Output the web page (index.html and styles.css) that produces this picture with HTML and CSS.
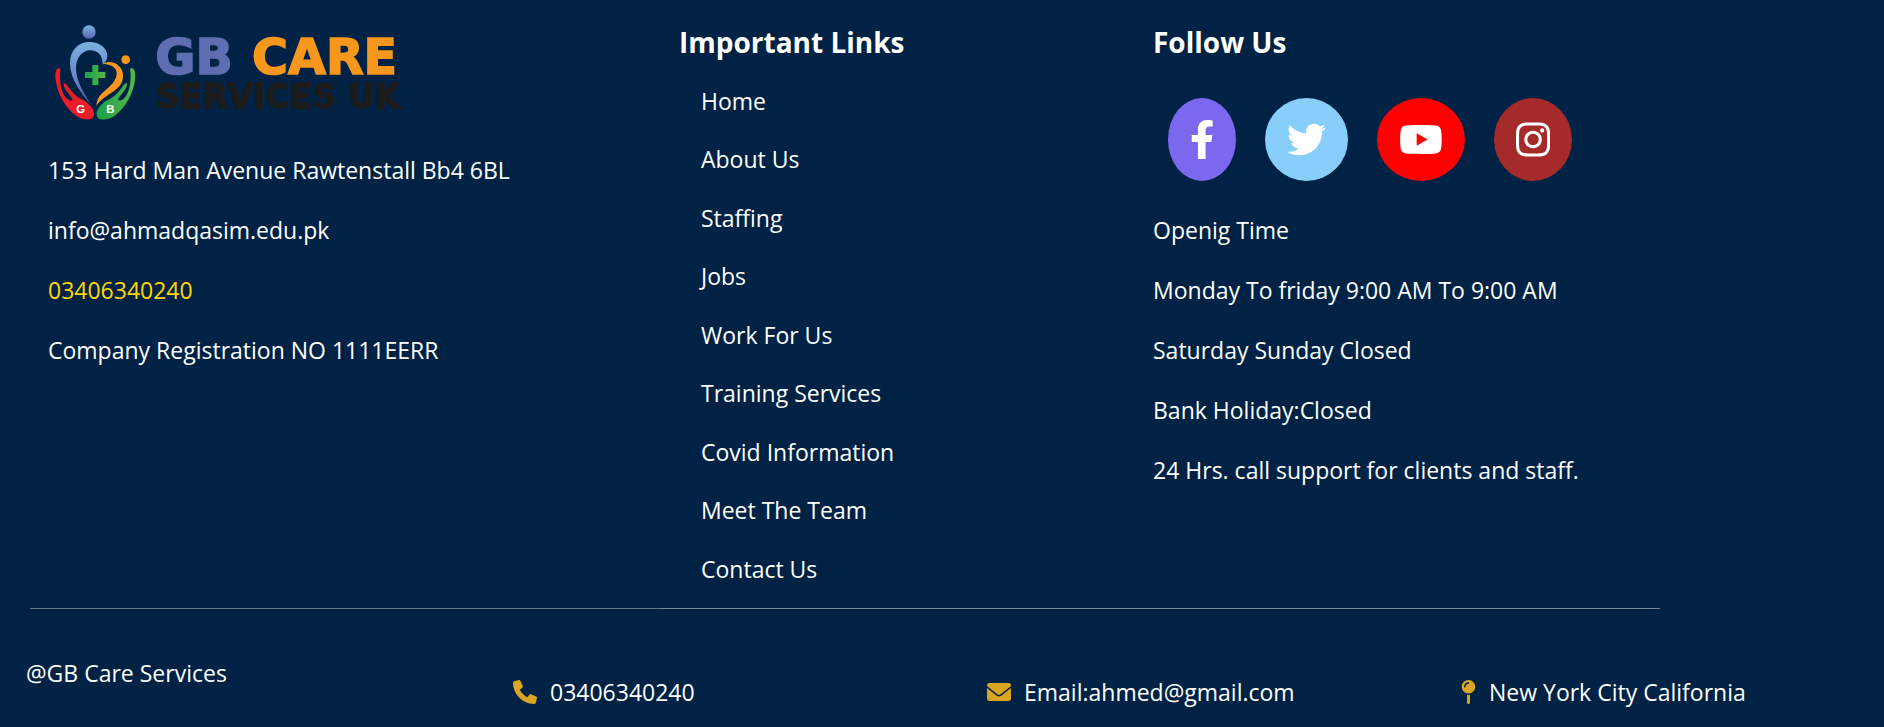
FILE: index.html
```html
<!DOCTYPE html>
<html lang="en">
<head>
<meta charset="utf-8">
<title>GB Care Services</title>
<link rel="stylesheet" href="styles.css">
</head>
<body>
<footer class="footer">
  <div class="columns">
    <section class="column">
      <svg class="logo" viewBox="84 60 1080 306" role="img" aria-label="GB Care Services UK">
        <defs>
          <linearGradient id="blue" x1="0" y1="0" x2="0" y2="1"><stop offset="0" stop-color="#79b0e0"/><stop offset="1" stop-color="#5c63b0"/></linearGradient>
          <linearGradient id="green" x1="0" y1="0" x2="1" y2="0"><stop offset="0" stop-color="#55b948"/><stop offset="1" stop-color="#1b9f4b"/></linearGradient>
          <linearGradient id="cross" x1="0" y1="0" x2="1" y2="0"><stop offset="0" stop-color="#1b9f4b"/><stop offset="1" stop-color="#55b948"/></linearGradient>
          <path id="hand" d="M118 204C106 205 104 225 108 245C115 285 135 320 165 345C178 356 195 359 208 358C220 357 225 345 221 334C215 318 200 305 185 298C168 290 160 280 150 268C145 260 140 252 132 248C128 258 138 270 145 280C150 288 160 296 157 301C148 304 138 295 132 285C120 262 119 235 121 212C122 206 120 204 118 204Z"/>
        </defs>
        <circle cx="207" cy="96" r="20" fill="url(#blue)"/>
        <path fill="url(#blue)" d="M214 316C185 280 150 240 150 190C150 150 175 126 208 126C240 126 262 145 262 168C262 178 256 188 248 194C248 165 232 151 212 151C185 151 168 175 168 205C168 245 195 285 214 316Z"/>
        <circle cx="317" cy="179" r="13" fill="#f8971d"/>
        <path fill="#f8971d" d="M250 192C262 184 280 184 292 194C308 205 314 225 306 245C295 275 250 285 229 318C230 285 255 275 273 255C290 238 296 215 283 203C275 195 262 193 250 192Z"/>
        <path fill="url(#cross)" d="M217 195H235V216H256V234H235V255H217V234H195V216H217Z"/>
        <use href="#hand" fill="#ed1c29"/>
        <use href="#hand" fill="url(#green)" transform="translate(452 0) scale(-1 1)"/>
        <text class="logo-initial" x="182" y="339">G</text>
        <text class="logo-initial" x="271" y="339">B</text>
        <text class="logo-name logo-gb" x="406" y="221">GB</text>
        <text class="logo-name logo-care" x="696" y="221">CARE</text>
        <text class="logo-sub" x="409" y="323">SERVICES UK</text>
      </svg>
      <p>153 Hard Man Avenue Rawtenstall Bb4 6BL</p>
      <p>info@ahmadqasim.edu.pk</p>
      <p class="phone">03406340240</p>
      <p>Company Registration NO 1111EERR</p>
    </section>
    <section class="column column-strong">
      <h2>Important Links</h2>
      <ul class="links">
        <li><a href="#">Home</a></li>
        <li><a href="#">About Us</a></li>
        <li><a href="#">Staffing</a></li>
        <li><a href="#">Jobs</a></li>
        <li><a href="#">Work For Us</a></li>
        <li><a href="#">Training Services</a></li>
        <li><a href="#">Covid Information</a></li>
        <li><a href="#">Meet The Team</a></li>
        <li><a href="#">Contact Us</a></li>
      </ul>
    </section>
    <section class="column column-strong">
      <h2>Follow Us</h2>
      <div class="social">
        <a class="facebook" href="#" aria-label="Facebook"><svg viewBox="0 0 320 512"><path d="M279.14 288l14.22-92.66h-88.91v-60.13c0-25.35 12.42-50.06 52.24-50.06h40.42V6.26S260.43 0 225.36 0c-73.22 0-121.08 44.38-121.08 124.72v70.62H22.89V288h81.39v224h100.17V288z"/></svg></a>
        <a class="twitter" href="#" aria-label="Twitter"><svg viewBox="0 0 512 512"><path d="M459.37 151.716c.325 4.548.325 9.097.325 13.645 0 138.72-105.583 298.558-298.558 298.558-59.452 0-114.68-17.219-161.137-47.106 8.447.974 16.568 1.299 25.34 1.299 49.055 0 94.213-16.568 130.274-44.832-46.132-.975-84.792-31.188-98.112-72.772 6.498.974 12.995 1.624 19.818 1.624 9.421 0 18.843-1.3 27.614-3.573-48.081-9.747-84.143-51.98-84.143-102.985v-1.299c13.969 7.797 30.214 12.67 47.431 13.319-28.264-18.843-46.781-51.005-46.781-87.391 0-19.492 5.197-37.36 14.294-52.954 51.655 63.675 129.3 105.258 216.365 109.807-1.624-7.797-2.599-15.918-2.599-24.04 0-57.828 46.782-104.934 104.934-104.934 30.213 0 57.502 12.67 76.67 33.137 23.715-4.548 46.456-13.32 66.599-25.34-7.798 24.366-24.366 44.833-46.132 57.827 21.117-2.273 41.584-8.122 60.426-16.243-14.292 20.791-32.161 39.308-52.628 54.253z"/></svg></a>
        <a class="youtube" href="#" aria-label="YouTube"><svg viewBox="0 0 576 512"><path d="M549.655 124.083c-6.281-23.65-24.787-42.276-48.284-48.597C458.781 64 288 64 288 64S117.22 64 74.629 75.486c-23.497 6.322-42.003 24.947-48.284 48.597-11.412 42.867-11.412 132.305-11.412 132.305s0 89.438 11.412 132.305c6.281 23.65 24.787 41.5 48.284 47.821C117.22 448 288 448 288 448s170.78 0 213.371-11.486c23.497-6.321 42.003-24.171 48.284-47.821 11.412-42.867 11.412-132.305 11.412-132.305s0-89.438-11.412-132.305zm-317.51 213.508V175.185l142.739 81.205-142.739 81.201z"/></svg></a>
        <a class="instagram" href="#" aria-label="Instagram"><svg viewBox="0 0 448 512"><path d="M224.1 141c-63.6 0-114.9 51.3-114.9 114.9s51.3 114.9 114.9 114.9S339 319.5 339 255.9 287.7 141 224.1 141zm0 189.6c-41.1 0-74.7-33.5-74.7-74.7s33.5-74.7 74.7-74.7 74.7 33.5 74.7 74.7-33.6 74.7-74.7 74.7zm146.4-194.3c0 14.9-12 26.8-26.8 26.8-14.9 0-26.8-12-26.8-26.8s12-26.8 26.8-26.8 26.8 12 26.8 26.8zm76.1 27.2c-1.7-35.9-9.9-67.7-36.2-93.9-26.2-26.2-58-34.4-93.9-36.2-37-2.1-147.9-2.1-184.9 0-35.8 1.7-67.6 9.9-93.9 36.1s-34.4 58-36.2 93.9c-2.1 37-2.1 147.9 0 184.9 1.7 35.9 9.9 67.7 36.2 93.9s58 34.4 93.9 36.2c37 2.1 147.9 2.1 184.9 0 35.9-1.7 67.7-9.9 93.9-36.2 26.2-26.2 34.4-58 36.2-93.9 2.1-37 2.1-147.8 0-184.8zM398.8 388c-7.8 19.6-22.9 34.7-42.6 42.6-29.5 11.7-99.5 9-132.1 9s-102.7 2.6-132.1-9c-19.6-7.8-34.7-22.9-42.6-42.6-11.7-29.5-9-99.5-9-132.1s-2.6-102.7 9-132.1c7.8-19.6 22.9-34.7 42.6-42.6 29.5-11.7 99.5-9 132.1-9s102.7-2.6 132.1 9c19.6 7.8 34.7 22.9 42.6 42.6 11.7 29.5 9 99.5 9 132.1s2.7 102.7-9 132.1z"/></svg></a>
      </div>
      <p>Openig Time</p>
      <p>Monday To friday 9:00 AM To 9:00 AM</p>
      <p>Saturday Sunday Closed</p>
      <p>Bank Holiday:Closed</p>
      <p>24 Hrs. call support for clients and staff.</p>
    </section>
  </div>
  <div class="bottom">
    <div class="brand">@GB Care Services</div>
    <div class="contact"><svg viewBox="0 0 512 512"><path d="M511.2 387l-23.25 100.8c-3.266 14.25-15.79 24.22-30.46 24.22C205.2 512 0 306.8 0 54.5c0-14.66 9.969-27.2 24.22-30.45l100.8-23.25C139.7-2.602 154.7 5.018 160.8 18.92l46.52 108.5c5.438 12.78 1.77 27.67-8.98 36.45L144.5 207.1c33.98 69.22 90.26 125.5 159.5 159.5l44.08-53.8c8.688-10.78 23.69-14.51 36.47-8.975l108.5 46.51C506.1 357.2 514.6 372.4 511.2 387z"/></svg><span>03406340240</span></div>
    <div class="contact"><svg viewBox="0 0 512 512"><path d="M256 352c-16.53 0-33.06-5.422-47.16-16.41L0 173.2V400C0 426.5 21.49 448 48 448h416c26.51 0 48-21.49 48-48V173.2l-208.8 162.5C289.1 346.6 272.5 352 256 352zM16.29 145.3l212.2 165.1c16.19 12.6 38.87 12.6 55.06 0l212.2-165.1C505.1 137.3 512 125 512 112C512 85.49 490.5 64 464 64h-416C21.49 64 0 85.49 0 112C0 125 6.01 137.3 16.29 145.3z"/></svg><span>Email:ahmed@gmail.com</span></div>
    <div class="contact"><svg viewBox="16 0 320 512"><path d="M320 144C320 223.5 255.5 288 176 288C96.47 288 32 223.5 32 144C32 64.47 96.47 0 176 0C255.5 0 320 64.47 320 144zM192 64C192 55.16 184.8 48 176 48C122.1 48 80 90.98 80 144C80 152.8 87.16 160 96 160C104.8 160 112 152.8 112 144C112 108.7 140.7 80 176 80C184.8 80 192 72.84 192 64zM144 480V317.1C154.4 319 165.1 319.1 176 319.1C186.9 319.1 197.6 319 208 317.1V480C208 497.7 193.7 512 176 512C158.3 512 144 497.7 144 480z"/></svg><span>New York City California</span></div>
  </div>
</footer>
</body>
</html>
```
FILE: styles.css
```css
* { box-sizing: border-box; }

body {
  margin: 0;
  background: #002244;
  color: #fff;
  font: 23px/36px "Segoe UI", "Open Sans", "Noto Sans", sans-serif;
}

.footer { min-height: 100vh; overflow-x: hidden; }

.columns {
  display: grid;
  grid-template-columns: 631fr 474fr 525fr;
  padding: 20px 224px 0 30px;
}

.column {
  padding: 0 18px;
  border-bottom: 1px solid #667a8c;
}

.column-strong { border-color: #778b9b; }

.logo {
  display: block;
  width: 360px;
  height: 102px;
  margin-bottom: 30px;
}

.logo-initial {
  font: bold 34px "Liberation Sans", sans-serif;
  fill: #fff;
  text-anchor: middle;
}

.logo-name {
  font: bold 147px "DejaVu Sans", sans-serif;
  stroke-width: 5px;
}

.logo-gb { fill: #5f6db3; stroke: #5f6db3; }
.logo-care { fill: #f8971d; stroke: #f8971d; }

.logo-sub {
  font: bold 99px "DejaVu Sans", sans-serif;
  fill: #1b1b1b;
  stroke: #1b1b1b;
  stroke-width: 4px;
}

p { margin: 0 0 24px; white-space: nowrap; }
.phone { color: #ffd700; }

h2 {
  margin: 0;
  font-size: 28px;
  line-height: 44px;
  font-weight: 700;
}

.links {
  list-style: none;
  margin: 0;
  padding: 8px 0 10px 22px;
}

.links li { height: 58px; padding-top: 11px; }
.links li:nth-child(even) { height: 59px; }

a { color: inherit; text-decoration: none; }

.social {
  display: flex;
  gap: 29px;
  padding: 34px 0 31px 15px;
}

.social a {
  display: flex;
  padding: 22px;
  border-radius: 50%;
}

.social svg { height: 39px; fill: #fff; }
.facebook { background: #7b68ee; }
.twitter { background: #87cefa; }
.youtube { background: #ff0000; }
.instagram { background: #a52a2a; }

.bottom {
  display: grid;
  grid-template-columns: 487fr 474fr 474fr 423fr;
  padding: 46px 0 16px 26px;
}

.contact {
  display: flex;
  align-items: center;
  gap: 13px;
  padding-top: 19px;
  white-space: nowrap;
}

.contact svg { height: 24px; fill: #daa520; }
```
